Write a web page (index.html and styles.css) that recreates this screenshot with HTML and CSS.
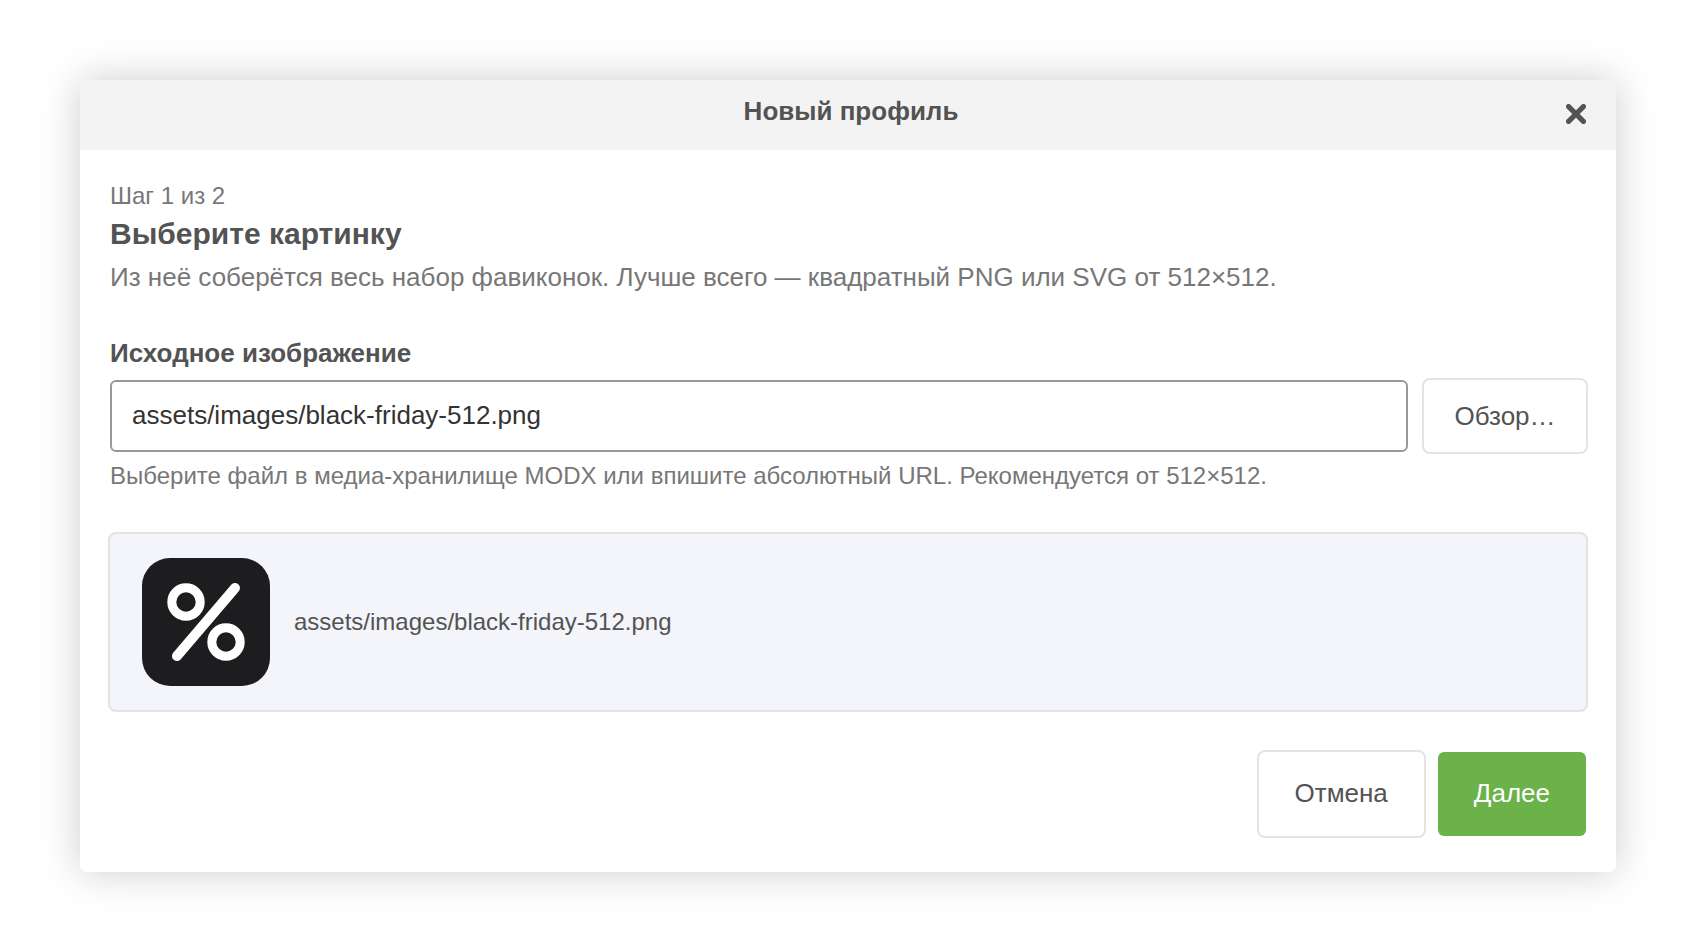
FILE: index.html
```html
<!DOCTYPE html>
<html lang="ru">
<head>
    <meta charset="UTF-8">
    <meta name="viewport" content="width=device-width, initial-scale=1.0">
    <title>Новый профиль</title>
    <link rel="stylesheet" href="styles.css">
</head>
<body>
    <div class="window" role="dialog" aria-labelledby="window-title">
        <header class="window-header">
            <h1 class="window-title" id="window-title">Новый профиль</h1>
            <button class="window-close" type="button" aria-label="Закрыть">
                <svg width="20" height="20" viewBox="0 0 20 20" aria-hidden="true">
                    <path d="M2.6 2.6 17.4 17.4M17.4 2.6 2.6 17.4" fill="none" stroke="currentColor" stroke-width="5.2" stroke-linecap="round"/>
                </svg>
            </button>
        </header>
        <form class="window-body">
            <p class="step">Шаг 1 из 2</p>
            <h2 class="heading">Выберите картинку</h2>
            <p class="intro">Из неё соберётся весь набор фавиконок. Лучше всего — квадратный PNG или SVG от 512×512.</p>

            <label class="label" for="source">Исходное изображение</label>
            <div class="field">
                <input class="input" type="text" id="source" value="assets/images/black-friday-512.png" aria-describedby="source-hint">
                <button class="btn btn-browse" type="button">Обзор…</button>
            </div>
            <p class="hint" id="source-hint">Выберите файл в медиа-хранилище MODX или впишите абсолютный URL. Рекомендуется от 512×512.</p>

            <div class="preview">
                <svg class="preview-image" viewBox="0 0 128 128" aria-hidden="true">
                    <rect width="128" height="128" rx="28" fill="#1d1d1f"/>
                    <g fill="none" stroke="#fff">
                        <circle cx="44" cy="44" r="14.2" stroke-width="9"/>
                        <circle cx="84" cy="84" r="14.2" stroke-width="9"/>
                        <path d="M93 30 35 98" stroke-width="10" stroke-linecap="round"/>
                    </g>
                </svg>
                <span class="preview-path">assets/images/black-friday-512.png</span>
            </div>

            <div class="actions">
                <button class="btn" type="button">Отмена</button>
                <button class="btn btn-primary" type="submit">Далее</button>
            </div>
        </form>
    </div>
</body>
</html>
```
FILE: styles.css
```css
* {
    box-sizing: border-box;
}
body {
    margin: 0;
    padding: 80px;
    background: #fff;
    color: #535353;
    font-family: "Liberation Sans", Arial, sans-serif;
    font-size: 26px;
}
h1, h2, p {
    margin: 0;
}
.window {
    background: #fff;
    border-radius: 6px;
    box-shadow: 0 0 40px rgba(0, 0, 0, 0.2);
}
/* Header */
.window-header {
    display: flex;
    align-items: center;
    padding: 14px 30px 22px;
    background: #f3f3f3;
    border-radius: 6px 6px 0 0;
}
.window-title {
    flex: 1;
    padding-left: 26px;
    font-size: 26px;
    line-height: 34px;
    text-align: center;
}
.window-close {
    display: flex;
    padding: 6px 0 0;
    border: 0;
    background: none;
    color: #535353;
    cursor: pointer;
}
/* Body */
.window-body {
    padding: 30px 30px 36px;
}
.step,
.hint {
    color: #777;
    font-size: 24px;
    line-height: 32px;
}
.heading {
    font-size: 30px;
    line-height: 44px;
}
.intro {
    color: #777;
    line-height: 42px;
}
.label {
    display: block;
    margin: 38px 0 10px;
    font-weight: bold;
    line-height: 34px;
}
.field {
    display: flex;
    gap: 16px;
}
.input {
    flex: 1;
    min-width: 0;
    height: 72px;
    padding: 0 20px 2px;
    border: 2px solid #999;
    border-radius: 6px;
    background: #fff;
    color: #333;
    font: inherit;
}
.hint {
    margin-top: 8px;
}
/* Selected image */
.preview {
    display: flex;
    align-items: center;
    gap: 24px;
    margin: 42px 0;
    padding: 24px 32px;
    background: #f4f5fa;
    border-radius: 6px;
    box-shadow: 0 0 0 2px #e4e4e4;
}
.preview-image {
    width: 128px;
    height: 128px;
}
.preview-path {
    font-size: 24px;
}
/* Buttons */
.btn {
    min-width: 148px;
    padding: 25px 36px 27px;
    border: 0;
    border-radius: 6px;
    background: #fff;
    box-shadow: 0 0 0 2px #e4e4e4;
    color: #535353;
    font: inherit;
    line-height: 32px;
    cursor: pointer;
}
.btn-browse {
    min-width: 162px;
    padding: 20px 30px;
}
.btn-primary {
    background: #6cb24a;
    box-shadow: none;
    color: #fff;
}
.actions {
    display: flex;
    justify-content: flex-end;
    gap: 14px;
}
```
